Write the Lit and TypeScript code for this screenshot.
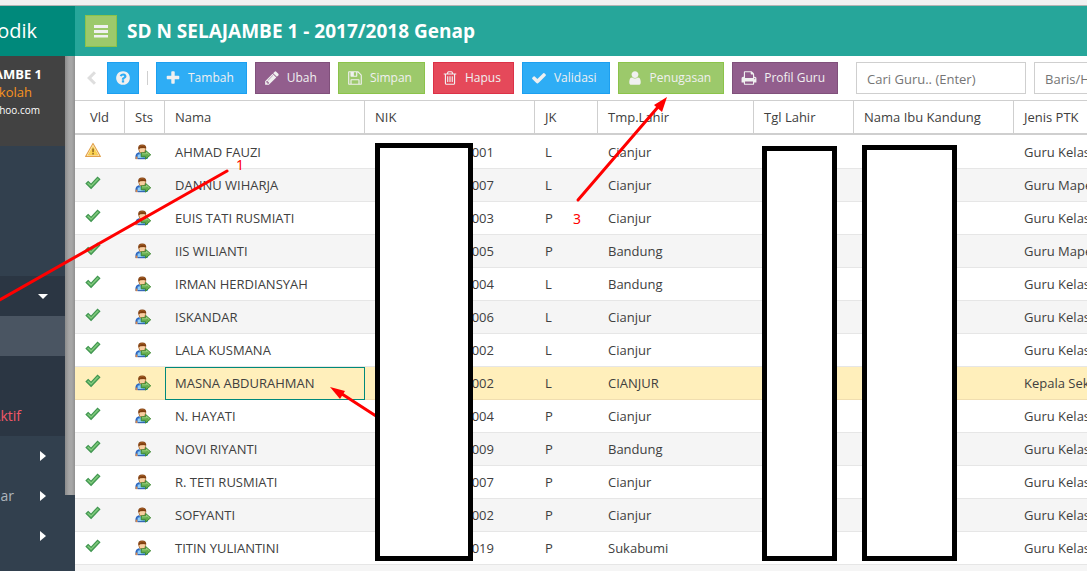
import { LitElement, html, css, svg } from "lit";
import { customElement, property } from "lit/decorators.js";
import { classMap } from "lit/directives/class-map.js";

const ICONS: Record<string, string> = {
  help: "M1024 1376v-192q0-14-9-23t-23-9h-192q-14 0-23 9t-9 23v192q0 14 9 23t23 9h192q14 0 23-9t9-23zm256-672q0-88-55.5-163t-138.5-116-170-41q-243 0-371 213-15 24 8 42l132 100q7 6 19 6 16 0 25-12 53-68 86-92 34-24 86-24 48 0 85.5 26t37.5 59q0 38-20 61t-68 45q-63 28-115.5 86.5t-52.5 125.5v36q0 14 9 23t23 9h192q14 0 23-9t9-23q0-19 21.5-49.5t54.5-49.5q32-18 49-28.5t46-35 44.5-48 28-60.5 12.5-81zm384 192q0 209-103 385.5t-279.5 279.5-385.5 103-385.5-103-279.5-279.5-103-385.5 103-385.5 279.5-279.5 385.5-103 385.5 103 279.5 279.5 103 385.5z",
  plus: "M1600 736v192q0 40-28 68t-68 28h-416v416q0 40-28 68t-68 28h-192q-40 0-68-28t-28-68v-416h-416q-40 0-68-28t-28-68v-192q0-40 28-68t68-28h416v-416q0-40 28-68t68-28h192q40 0 68 28t28 68v416h416q40 0 68 28t28 68z",
  pencil: "M491 1536l91-91-235-235-91 91v107h128v128h107zm523-928q0-22-22-22-10 0-17 7l-542 542q-7 7-7 17 0 22 22 22 10 0 17-7l542-542q7-7 7-17zm-54-192l416 416-832 832h-416v-416zm683 96q0 53-37 90l-166 166-416-416 166-165q36-38 90-38 53 0 91 38l235 234q37 39 37 91z",
  save: "M512 1536h768v-384h-768v384zm896 0h128v-896q0-14-10-38.5t-20-34.5l-281-281q-10-10-34-20t-39-10v416q0 40-28 68t-68 28h-576q-40 0-68-28t-28-68v-416h-128v1280h128v-416q0-40 28-68t68-28h832q40 0 68 28t28 68v416zm-384-928v-320q0-13-9.5-22.5t-22.5-9.5h-192q-13 0-22.5 9.5t-9.5 22.5v320q0 13 9.5 22.5t22.5 9.5h192q13 0 22.5-9.5t9.5-22.5zm640 32v928q0 40-28 68t-68 28h-1344q-40 0-68-28t-28-68v-1344q0-40 28-68t68-28h928q40 0 88 20t76 48l280 280q28 28 48 76t20 88z",
  trash: "M704 736v576q0 14-9 23t-23 9h-64q-14 0-23-9t-9-23v-576q0-14 9-23t23-9h64q14 0 23 9t9 23zm256 0v576q0 14-9 23t-23 9h-64q-14 0-23-9t-9-23v-576q0-14 9-23t23-9h64q14 0 23 9t9 23zm256 0v576q0 14-9 23t-23 9h-64q-14 0-23-9t-9-23v-576q0-14 9-23t23-9h64q14 0 23 9t9 23zm128 724v-948h-896v948q0 22 7 40.5t14.5 27 10.5 8.5h832q3 0 10.5-8.5t14.5-27 7-40.5zm-672-1076h448l-48-117q-7-9-17-11h-317q-10 2-17 11zm928 32v64q0 14-9 23t-23 9h-96v948q0 83-47 143.5t-113 60.5h-832q-66 0-113-58.5t-47-141.5v-952h-96q-14 0-23-9t-9-23v-64q0-14 9-23t23-9h309l70-167q15-37 54-63t79-26h320q40 0 79 26t54 63l70 167h309q14 0 23 9t9 23z",
  check: "M1671 566q0 40-28 68l-724 724-136 136q-28 28-68 28t-68-28l-136-136-362-362q-28-28-28-68t28-68l136-136q28-28 68-28t68 28l294 295 656-657q28-28 68-28t68 28l136 136q28 28 28 68z",
  user: "M1536 1399q0 109-62.5 187t-150.5 78h-854q-88 0-150.5-78t-62.5-187q0-85 8.5-160.5t31.5-152 58.5-131 94-89 134.5-34.5q131 128 313 128t313-128q76 0 134.5 34.5t94 89 58.5 131 31.5 152 8.5 160.5zm-256-887q0 159-112.5 271.5t-271.5 112.5-271.5-112.5-112.5-271.5 112.5-271.5 271.5-112.5 271.5 112.5 112.5 271.5z",
  print: "M448 1536h896v-256h-896v256zm0-640h896v-384h-160q-40 0-68-28t-28-68v-160h-640v640zm1152 64q0-26-19-45t-45-19-45 19-19 45 19 45 45 19 45-19 19-45zm128 0v416q0 13-9.5 22.5t-22.5 9.5h-224v160q0 40-28 68t-68 28h-960q-40 0-68-28t-28-68v-160h-224q-13 0-22.5-9.5t-9.5-22.5v-416q0-79 56.5-135.5t135.5-56.5h64v-544q0-40 28-68t68-28h672q40 0 88 20t76 48l152 152q28 28 48 76t20 88v256h64q79 0 135.5 56.5t56.5 135.5z",
  bars: "M112 224h1568v336h-1568zM112 784h1568v336h-1568zM112 1344h1568v280h-1568z",
  back: "M1216 130l240 240-526 526 526 526-240 240-766-766z",
};

@customElement("tool-icon")
class ToolIcon extends LitElement {
  @property() name = "";
  @property({ type: Number }) size = 16;
  static styles = css`
    :host { display: inline-flex; }
    .glyph { display: block; fill: currentColor; }
  `;
  render() {
    return html`<svg class="glyph" width=${this.size} height=${this.size} viewBox="0 0 1792 1792" aria-hidden="true">
      <path d=${ICONS[this.name] ?? ""}></path>
    </svg>`;
  }
}

const checkIcon = html`<svg class="status" width="16" height="16" viewBox="0 0 16 16" role="img" aria-label="Valid">
  <path d="M.3 8.6 3.2 5.8 6 8.6 12.5 1.4 15.6 4.2 6.1 14.2Z" fill="#3f9550"></path>
  <path d="M1.8 8.6 3.3 7.2 6.1 10 12.6 2.9 14.1 4.3 6.1 12.6Z" fill="#6dbb6c"></path>
  <path d="M3.2 8.2 6.1 10.9 12.8 3.9" fill="none" stroke="#86cf82" stroke-width="1"></path>
</svg>`;

const warnIcon = html`<svg class="status" width="16" height="16" viewBox="0 0 16 16" role="img" aria-label="Peringatan">
  <path d="M8 1.4 15.4 14.4H.6Z" fill="#fff6d5" stroke="#e2a04a" stroke-width="1.1" stroke-linejoin="round"></path>
  <path d="M8 4.4 12.9 13H3.1Z" fill="#fbd34f" stroke="#f2bf3f" stroke-width=".6"></path>
  <path d="M7.3 6.4h1.5v3.8H7.3zM7.3 11h1.5v1.4H7.3z" fill="#8f6420"></path>
</svg>`;

const personIcon = html`<svg class="person" width="16" height="16" viewBox="0 0 16 16" role="img" aria-label="Status">
  <path d="M.6 15V12.3Q.8 8.8 4.6 8.3L8 10.8 10.8 8.4Q12.8 9 13 12V15Z" fill="#5fb3ee"></path>
  <path d="M.6 12Q.9 8.8 4.4 8.3L4.6 10 2.6 15H.6Z" fill="#2d63bd"></path>
  <path d="M.6 12.6h2V15.2H.6Z" fill="#d8844a"></path>
  <path d="M2.6 10.6h3.7L8.5 15H2.6Z" fill="#8bcdfa"></path>
  <path d="M2.8 14.7H10" stroke="#2450a8" stroke-width="1"></path>
  <path d="M4.5 8.2 7.2 10.8 9.8 8.2" fill="#fff"></path>
  <ellipse cx="7.2" cy="5.6" rx="3.3" ry="3.7" fill="#f8cfa2" stroke="#a86429" stroke-width=".8"></ellipse>
  <path d="M3.3 5.5Q2.4.6 7.2.5 12 .6 11.1 5.5L10.3 3.9 5.4 4.2Z" fill="#803f10"></path>
  <path d="M4.4 2.4Q7 .8 9.8 2.1" stroke="#ad672c" stroke-width=".8" fill="none"></path>
  <path d="M6.2 8.8H10.6V6.4L15.7 10.8 10.6 15.2V12.8H6.2Z" fill="#65ad4e" stroke="#348028" stroke-width=".9"></path>
  <path d="M7 9.8H11.4V8.3L14.4 10.8" fill="none" stroke="#a9dc91" stroke-width=".8"></path>
</svg>`;

const TOOLS = [
  { label: "Tambah", icon: "plus", tone: "blue" },
  { label: "Ubah", icon: "pencil", tone: "purple" },
  { label: "Simpan", icon: "save", tone: "green" },
  { label: "Hapus", icon: "trash", tone: "red" },
  { label: "Validasi", icon: "check", tone: "blue" },
  { label: "Penugasan", icon: "user", tone: "green" },
  { label: "Profil Guru", icon: "print", tone: "purple" },
];

const COLUMNS: [string, string][] = [
  ["Vld", "c-vld"], ["Sts", "c-sts"], ["Nama", "c-nama"], ["NIK", "c-nik"], ["JK", "c-jk"],
  ["Tmp.Lahir", "c-tmp"], ["Tgl Lahir", "c-tgl"], ["Nama Ibu Kandung", "c-ibu"], ["Jenis PTK", "c-ptk"],
];

const ROWS: [string, string, string, string, string][] = [
  ["AHMAD FAUZI", "001", "L", "Cianjur", "Guru Kelas"],
  ["DANNU WIHARJA", "007", "L", "Cianjur", "Guru Mapel"],
  ["EUIS TATI RUSMIATI", "003", "P", "Cianjur", "Guru Kelas"],
  ["IIS WILIANTI", "005", "P", "Bandung", "Guru Mapel"],
  ["IRMAN HERDIANSYAH", "004", "L", "Bandung", "Guru Kelas"],
  ["ISKANDAR", "006", "L", "Cianjur", "Guru Kelas"],
  ["LALA KUSMANA", "002", "L", "Cianjur", "Guru Kelas"],
  ["MASNA ABDURAHMAN", "002", "L", "CIANJUR", "Kepala Sekolah"],
  ["N. HAYATI", "004", "P", "Cianjur", "Guru Kelas"],
  ["NOVI RIYANTI", "009", "P", "Bandung", "Guru Kelas"],
  ["R. TETI RUSMIATI", "007", "P", "Cianjur", "Guru Kelas"],
  ["SOFYANTI", "002", "P", "Cianjur", "Guru Kelas"],
  ["TITIN YULIANTINI", "019", "P", "Sukabumi", "Guru Kelas"],
];
const SELECTED = 7;

@customElement("side-menu")
class SideMenu extends LitElement {
  static styles = css`
    :host { display: flex; background: #32404e; color: #fff; }
    .panel { flex: 1; min-width: 0; overflow: hidden; }
    .shade { width: 10px; height: 439px; background: linear-gradient(90deg, #8c8c8c, #a6a6a6 40%, #a6a6a6 70%, #909090); }
    .school {
      height: 90px; box-sizing: border-box; padding-top: 9px; background: #424242;
      display: flex; flex-direction: column; align-items: flex-end; white-space: nowrap;
    }
    .name { font-size: 13px; line-height: 18px; font-weight: 700; padding-right: 23px; }
    .role { font-size: 13px; line-height: 18px; color: #f7931e; padding-right: 33px; }
    .mail { font-size: 10px; line-height: 18px; padding-right: 25px; }
    .space { height: 130px; }
    .item {
      display: flex; align-items: center; justify-content: flex-end; height: 40px; width: 100%;
      box-sizing: border-box; padding: 0 17px 0 0; gap: 24px; border: 0; background: none;
      font: inherit; font-size: 14px; color: #aeb5bc; white-space: nowrap; text-decoration: none;
    }
    .dark { background: #2b3643; }
    .active { background: #4a5562; }
    .alert { color: #f25767; padding-right: 44px; }
    .arrow { display: block; flex: none; fill: #fff; }
  `;
  render() {
    const right = html`<svg class="arrow" width="10" height="10" viewBox="0 0 10 10"><path d="M2 0 8 5 2 10Z"></path></svg>`;
    return html`
      <nav class="panel" aria-label="Menu">
        <div class="school">
          <span class="name">AMBE 1</span>
          <span class="role">kolah</span>
          <span class="mail">hoo.com</span>
        </div>
        <div class="space"></div>
        <button class="item dark" aria-label="Tutup submenu">
          <svg class="arrow" width="10" height="10" viewBox="0 0 10 10"><path d="M0 3H10L5 8Z"></path></svg>
        </button>
        <a class="item active" href="#" aria-label="Guru"></a>
        <a class="item dark" href="#" aria-label="Tendik"></a>
        <a class="item dark alert" href="#">Aktif</a>
        <button class="item" aria-label="Buka submenu">${right}</button>
        <button class="item">ar ${right}</button>
        <button class="item" aria-label="Buka submenu">${right}</button>
      </nav>
      <div class="shade"></div>
    `;
  }
}

@customElement("app-root")
class AppRoot extends LitElement {
  static styles = css`
    :host {
      display: flex; flex-direction: column; position: relative; height: 100vh; overflow: hidden;
      background: #fff; color: #404040; font: 13px/18px "Open Sans", sans-serif;
    }
    .strip { flex: none; height: 5px; background: #f1f1f1; border-bottom: 1px solid #b4b4b4; }
    .top { flex: none; display: flex; height: 50px; background: #26a69a; color: #fff; }
    .brand {
      width: 75px; box-sizing: border-box; padding-right: 38px; background: #00897b; overflow: hidden;
      display: flex; align-items: center; justify-content: flex-end; font-size: 20px; line-height: 28px;
    }
    .bar { display: flex; align-items: center; gap: 10px; padding-left: 10px; white-space: nowrap; }
    .title { margin: 0; font-size: 19px; line-height: 26px; font-weight: 700; }
    .main { flex: 1; min-height: 0; display: flex; }
    .side { flex: none; width: 75px; }
    .content { flex: 1; min-width: 0; overflow: hidden; }
    .toolbar { display: flex; align-items: center; gap: 8px; height: 44px; padding-left: 8px; overflow: hidden; }
    .btn {
      flex: none; display: inline-flex; align-items: center; gap: 7px; height: 32px; box-sizing: border-box;
      padding: 0 12px 0 8px; border: 1px solid; color: #f0f0f0; font: inherit; font-size: 12px; white-space: nowrap;
    }
    .square { width: 32px; padding: 0; justify-content: center; }
    .blue { background: #2eadf5; border-color: #1c9ff0; }
    .purple { background: #925e8d; border-color: #80507b; }
    .green { background: #9cc96b; border-color: #8bc34a; }
    .red { background: #e5495a; border-color: #dc3147; }
    .back { flex: none; border: 0; padding: 0; background: none; color: #dedede; display: flex; }
    .divider { flex: none; width: 1px; height: 14px; background: #cfcfcf; }
    .field {
      flex: none; width: 170px; height: 32px; box-sizing: border-box; border: 1px solid #cfcfcf; border-radius: 0;
      padding: 2px 10px 0; font: inherit; color: #404040; background: #fff;
    }
    .field::placeholder { color: #757575; opacity: 1; }
    .search { margin-left: 10px; }
    .grid { width: 1139px; table-layout: fixed; border-collapse: separate; border-spacing: 0; }
    .grid th, .grid td { box-sizing: border-box; padding: 0 10px; text-align: left; white-space: nowrap; overflow: hidden; }
    .grid th {
      height: 35px; font-weight: 400; border-top: 1px solid #cfcfcf; border-bottom: 2px solid #cfcfcf;
      border-right: 1px solid #cfcfcf;
    }
    .grid td { height: 33px; border-bottom: 1px solid #e6e6e6; }
    .grid .first td { height: 34px; border-top: 1px solid #fff; }
    .odd td { background: #f5f5f5; }
    .grid .selected td { background: #ffefbb; border-bottom-color: #f0deb0; }
    .grid .focused { outline: 1px solid #00897b; outline-offset: -1px; }
    .c-vld { width: 50px; } .c-sts { width: 40px; } .c-nama { width: 200px; } .c-nik { width: 170px; }
    .c-jk { width: 63px; } .c-tmp { width: 156px; } .c-tgl { width: 100px; } .c-ibu { width: 160px; } .c-ptk { width: 200px; }
    .grid th.c-vld { padding-left: 15px; }
    .grid td.icon { padding: 0 10px 4px; }
    .grid td.who { padding-bottom: 1px; }
    .grid td.nik { text-align: right; padding-right: 41px; }
    .status, .person { display: block; }
    .marks { position: absolute; inset: 0; width: 100%; height: 100%; pointer-events: none; }
    .cover { fill: #fff; stroke: #000; stroke-width: 5; }
    .line { stroke: #f00; stroke-width: 3; stroke-linecap: round; }
    .head { fill: #f00; }
    .num { fill: #f00; font: 14px "Noto Sans", sans-serif; }
  `;

  render() {
    return html`
      <div class="strip"></div>
      <header class="top">
        <div class="brand">odik</div>
        <div class="bar">
          <button class="btn square green" aria-label="Menu"><tool-icon name="bars"></tool-icon></button>
          <h1 class="title">SD N SELAJAMBE 1 - 2017/2018 Genap</h1>
        </div>
      </header>
      <div class="main">
        <side-menu class="side"></side-menu>
        <main class="content">
          <div class="toolbar">
            <button class="back" aria-label="Kembali"><tool-icon name="back"></tool-icon></button>
            <button class="btn square blue" aria-label="Bantuan"><tool-icon name="help"></tool-icon></button>
            <span class="divider"></span>
            ${TOOLS.map((t) => html`<button class="btn ${t.tone}"><tool-icon name=${t.icon}></tool-icon>${t.label}</button>`)}
            <input class="field search" type="text" aria-label="Cari Guru" placeholder="Cari Guru.. (Enter)" />
            <input class="field" type="text" aria-label="Baris per halaman" placeholder="Baris/Hal" />
          </div>
          <table class="grid">
            <thead>
              <tr>${COLUMNS.map(([label, cls]) => html`<th class=${cls} scope="col">${label}</th>`)}</tr>
            </thead>
            <tbody>
              ${ROWS.map((r, i) => html`
                <tr class=${classMap({ first: i === 0, odd: i % 2 === 1, selected: i === SELECTED })}>
                  <td class="icon">${i === 0 ? warnIcon : checkIcon}</td>
                  <td class="icon who">${personIcon}</td>
                  <td class=${classMap({ focused: i === SELECTED })}>${r[0]}</td>
                  <td class="nik">${r[1]}</td>
                  <td>${r[2]}</td>
                  <td>${r[3]}</td>
                  <td></td>
                  <td></td>
                  <td>${r[4]}</td>
                </tr>`)}
              <tr class="odd">${COLUMNS.map(() => html`<td></td>`)}</tr>
            </tbody>
          </table>
        </main>
      </div>
      <svg class="marks" aria-hidden="true">
        ${svg`
          <path class="line" d="M227 171 -4 302"></path>
          <path class="line" d="M376 416 342 394"></path>
          <path class="head" d="M330 387 345 391 340 399Z"></path>
          <path class="line" d="M578 200 658 107"></path>
          <path class="head" d="M667 97 662 112 654 105Z"></path>
          <text class="num" x="236" y="170">1</text>
          <text class="num" x="573" y="224">3</text>
          <rect class="cover" x="377.5" y="145.5" width="93" height="413"></rect>
          <rect class="cover" x="764.5" y="148.5" width="70" height="410"></rect>
          <rect class="cover" x="864.5" y="147.5" width="90" height="411"></rect>
        `}
      </svg>
    `;
  }
}
